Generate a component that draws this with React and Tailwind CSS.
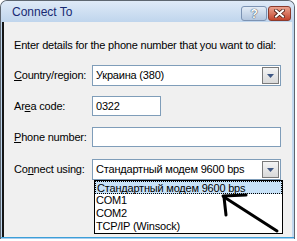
import React from 'react';

const font = { fontFamily: '"Liberation Sans", Arial, sans-serif' };

const Key = ({ children }) => <span className="underline underline-offset-[1px]">{children}</span>;

const DropButton = () => (
  <div className="w-[17px] h-[17px] border border-[#7a7a7a] bg-gradient-to-b from-[#f4f4f4] to-[#d9d9d9] flex items-center justify-center">
    <svg width="7" height="4" viewBox="0 0 7 4">
      <path d="M0 0 L7 0 L3.5 4 Z" fill="#3f5783" />
    </svg>
  </div>
);

const Combo = ({ value }) => (
  <div className="w-[189px] h-[21px] border border-[#7f9db9] bg-white flex items-center justify-between pl-[3px] pr-[1px]">
    <span>{value}</span>
    <DropButton />
  </div>
);

const Edit = ({ value, className }) => (
  <div className={`h-[20px] border border-[#7f9db9] bg-white flex items-center px-[3px] ${className}`}>
    {value}
  </div>
);

const Row = ({ label, children, className }) => (
  <div className={`flex items-center ${className}`}>
    <div className="w-[78px]">{label}</div>
    {children}
  </div>
);

export default function App() {
  const options = ['Стандартный модем 9600 bps', 'COM1', 'COM2', 'TCP/IP (Winsock)'];

  return (
    <div className="relative w-[297px] h-[241px] bg-white overflow-hidden text-[11px] leading-[13px] tracking-[-0.2px] text-black" style={font}>
      <div className="w-[295px] h-[239px] flex flex-col rounded-t-[7px] border border-b-0 border-[#5d6670] bg-[#c1d8ef]">
        {/* title bar */}
        <div className="h-[21px] flex items-center justify-between pl-[11px] pr-[3px] rounded-t-[6px] bg-gradient-to-b from-[#dfeaf7] to-[#bfd5ed]">
          <span className="text-[12px] tracking-normal text-[#182a73] mt-[2px]">Connect To</span>
          <div className="flex gap-[1px] mt-[4px]">
            <div className="w-[26px] h-[15px] rounded-[3px] border border-[#7c93b3] bg-gradient-to-b from-[#e3ecf6] to-[#b3c6de] flex items-center justify-center">
              <span className="text-[12px] font-bold text-white leading-none [text-shadow:0_0_1px_#2d3a4d,0_0_1px_#2d3a4d]">?</span>
            </div>
            <div className="w-[23px] h-[15px] rounded-[3px] border border-[#8a3a2c] bg-gradient-to-b from-[#eaa28f] to-[#c2432c] flex items-center justify-center">
              <svg width="11" height="9" viewBox="0 0 11 9">
                <path d="M2 1.5 L9 7.5 M9 1.5 L2 7.5" stroke="#4a1a12" strokeWidth="3.6" strokeLinecap="square" />
                <path d="M2 1.5 L9 7.5 M9 1.5 L2 7.5" stroke="#ffffff" strokeWidth="2" strokeLinecap="square" />
              </svg>
            </div>
          </div>
        </div>

        {/* client area */}
        <div className="h-[215px] ml-[1px] mr-[2px] border-l-2 border-[#151515] bg-[#f0f0f0] pl-[10px] pt-[17px]">
          <div>Enter details for the phone number that you want to dial:</div>
          <Row className="mt-[13px]" label={<><Key>C</Key>ountry/region:</>}>
            <Combo value="Украина (380)" />
          </Row>
          <Row className="mt-[10px]" label={<>Ar<Key>e</Key>a code:</>}>
            <Edit value="0322" className="w-[69px]" />
          </Row>
          <Row className="mt-[11px]" label={<><Key>P</Key>hone number:</>}>
            <Edit value="" className="w-[189px]" />
          </Row>
          <Row className="mt-[12px]" label={<>Co<Key>n</Key>nect using:</>}>
            <Combo value="Стандартный модем 9600 bps" />
          </Row>
        </div>
        <div className="h-[1px] bg-[#3c9fd8]" />
        <div className="h-[1px] bg-[#a9cdee]" />
      </div>

      {/* dropdown list */}
      <div className="absolute left-[94px] top-[180px] w-[189px] border border-black bg-white">
        {options.map((o, i) => (
          <div
            key={o}
            className={`h-[13px] pl-[1px] leading-[12px] ${i === 0 ? 'bg-[#c8e2f8] border border-dotted border-black pl-0' : ''}`}
          >
            {o}
          </div>
        ))}
      </div>

      {/* hand drawn arrow */}
      <svg className="absolute left-0 top-0 pointer-events-none" width="297" height="241" viewBox="0 0 297 241">
        <path d="M277 231 L224 197" stroke="#000" strokeWidth="3" strokeLinecap="round" fill="none" />
        <path d="M223 196 L246 195" stroke="#000" strokeWidth="3" strokeLinecap="round" fill="none" />
        <path d="M224 197 L226 215" stroke="#000" strokeWidth="3" strokeLinecap="round" fill="none" />
      </svg>
    </div>
  );
}
